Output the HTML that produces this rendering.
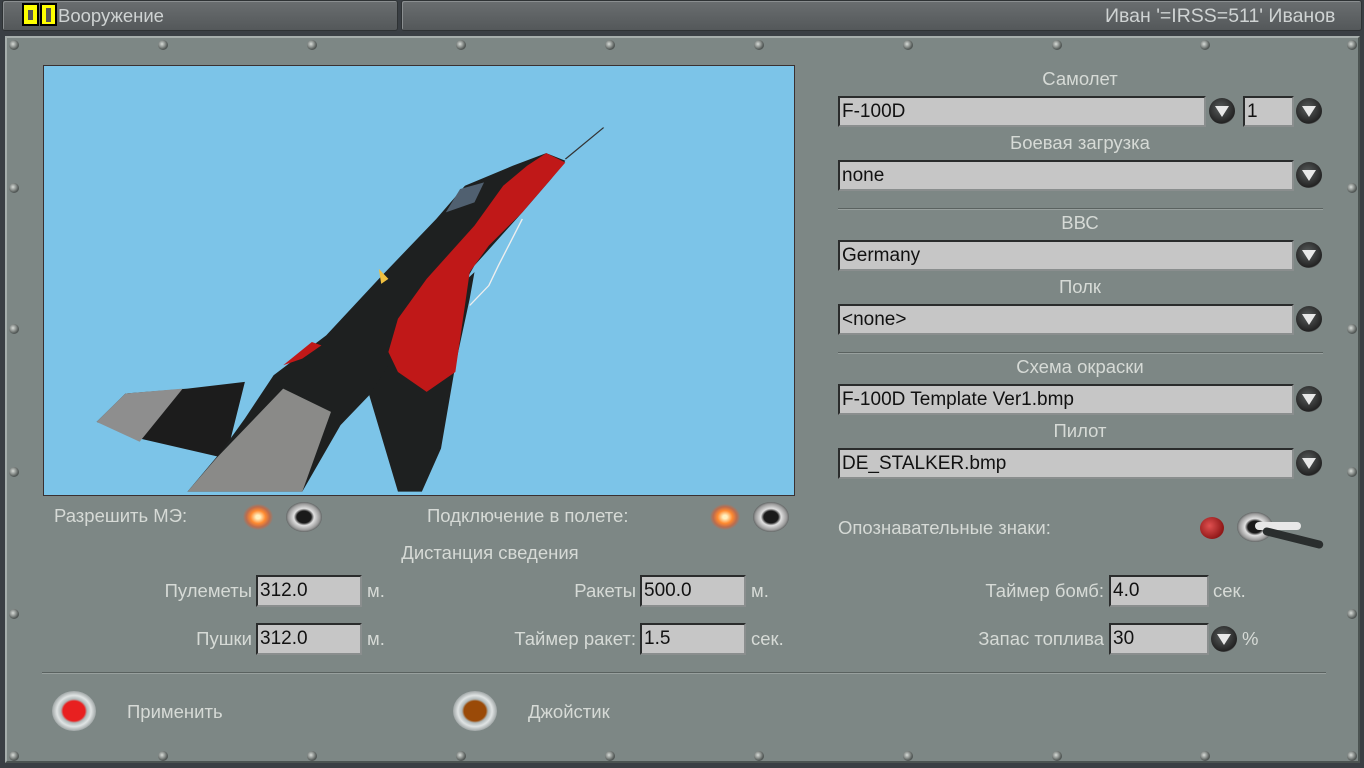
<!DOCTYPE html>
<html><head><meta charset="utf-8"><style>
*{margin:0;padding:0;box-sizing:border-box}
body{width:1364px;height:768px;overflow:hidden;background:#3a3f44;font-family:"Liberation Sans",sans-serif;position:relative}
.a{position:absolute}
.top{top:0;height:31px;background:linear-gradient(#6a6e70,#54585a);border:1px solid #2e3234;border-radius:3px;box-shadow:inset 1px 1px 0 #8a8e90}
.panel{left:5px;top:36px;width:1355px;height:727px;background:#7d8785;border-left:2px solid #a6aeac;border-top:2px solid #a6aeac;border-right:2px solid #4c5452;border-bottom:2px solid #4c5452}
.lbl{color:#d6dad6;font-size:18.5px;white-space:nowrap}
.f{background:#c6c6c6;border:2px solid #2a2c2c;border-right-color:#8a8e8e;border-bottom-color:#8a8e8e;color:#111;font-size:19px;padding-left:2px;line-height:27px;white-space:nowrap}
.dd{width:26px;height:26px;border-radius:50%;background:radial-gradient(circle at 45% 40%,#5a5e5e,#222 70%,#6a6e6e 75%,#7d8785 100%)}
.dd:after{content:"";position:absolute;left:6px;top:8px;border-left:7px solid transparent;border-right:7px solid transparent;border-top:11px solid #e8e8e8}
.sep{height:2px;background:#5a6260;border-bottom:1px solid #98a09e}
.sc{width:10px;height:10px;border-radius:50%;background:radial-gradient(circle at 40% 40%,#d8dcd8,#5a605e 60%,#2a2e2e)}
.c{text-align:center}
.glow{width:30px;height:26px;border-radius:50%;background:radial-gradient(#fff0c0 10%,#ff8a30 35%,rgba(230,90,40,.6) 55%,rgba(200,80,40,0) 72%)}
.tg{width:36px;height:30px;border-radius:50%;background:radial-gradient(#1a1a1a 28%,#e0e0e0 40%,#9a9a9a 62%,#5a5e5e 72%,rgba(0,0,0,0) 75%)}
</style></head><body>
<div class="a top" style="left:2px;width:396px"></div>
<div class="a top" style="left:401px;width:961px"></div>
<div class="a lbl" style="left:58px;top:5px;color:#cfd3d3">Вооружение</div>
<div class="a" style="left:22px;top:3px;width:17px;height:23px;background:#ff0;border:2px solid #000"><div style="margin:5px 4px;width:5px;height:10px;background:#555"></div></div>
<div class="a" style="left:40px;top:3px;width:17px;height:23px;background:#ff0;border:2px solid #000"><div style="margin:3px 4px;width:5px;height:14px;background:#555"></div></div>
<div class="a lbl" style="left:1105px;top:5px;color:#cfd3d3;font-size:19.5px">Иван '=IRSS=511' Иванов</div>
<div class="a panel"></div>

<div class="a sc" style="left:9px;top:40px"></div><div class="a sc" style="left:158px;top:40px"></div><div class="a sc" style="left:307px;top:40px"></div><div class="a sc" style="left:456px;top:40px"></div><div class="a sc" style="left:605px;top:40px"></div><div class="a sc" style="left:754px;top:40px"></div><div class="a sc" style="left:903px;top:40px"></div><div class="a sc" style="left:1052px;top:40px"></div><div class="a sc" style="left:1200px;top:40px"></div><div class="a sc" style="left:1347px;top:40px"></div>
<div class="a sc" style="left:9px;top:183px"></div><div class="a sc" style="left:9px;top:324px"></div><div class="a sc" style="left:9px;top:467px"></div><div class="a sc" style="left:9px;top:609px"></div><div class="a sc" style="left:9px;top:751px"></div>
<div class="a sc" style="left:1347px;top:183px"></div><div class="a sc" style="left:1347px;top:324px"></div><div class="a sc" style="left:1347px;top:467px"></div><div class="a sc" style="left:1347px;top:609px"></div><div class="a sc" style="left:1347px;top:751px"></div>
<div class="a sc" style="left:158px;top:751px"></div><div class="a sc" style="left:307px;top:751px"></div><div class="a sc" style="left:456px;top:751px"></div><div class="a sc" style="left:605px;top:751px"></div><div class="a sc" style="left:754px;top:751px"></div><div class="a sc" style="left:903px;top:751px"></div><div class="a sc" style="left:1052px;top:751px"></div><div class="a sc" style="left:1200px;top:751px"></div>

<div class="a" style="left:43px;top:65px;width:752px;height:431px;border:1px solid #3a3030;background:#7cc4e8;overflow:hidden">
<svg width="750" height="429" viewBox="0 0 1568 1290" preserveAspectRatio="none">
<line x1="1090" y1="280" x2="1170" y2="185" stroke="#333" stroke-width="3"/>
<polygon points="110,1070 170,985 300,970 420,950 380,1180 200,1120" fill="#1c1c1c"/>
<polygon points="110,1070 170,985 290,970 200,1130" fill="#8e8e8e"/>
<polygon points="1090,285 1060,340 1000,440 900,600 860,700 780,830 700,960 620,1080 540,1280 300,1280 370,1160 420,1060 480,930 590,810 700,640 820,460 880,360 980,300 1050,262" fill="#1e2020"/>
<polygon points="900,620 890,700 860,900 830,1150 790,1280 740,1280 680,990 760,810" fill="#1e2020"/>
<polygon points="1050,262 1090,290 1060,340 1000,440 930,540 890,620 880,720 860,920 800,980 740,920 720,860 740,760 800,640 900,480 960,360 1010,300" fill="#c01818"/>
<polygon points="560,830 500,900 540,880 580,840" fill="#c01818"/>
<polygon points="300,1280 360,1180 500,970 600,1040 540,1280" fill="#8a8a88"/>
<polygon points="840,440 870,370 920,350 900,410" fill="#506070"/>
<polyline points="1000,460 950,600 930,660 890,720" fill="none" stroke="#eee" stroke-width="3"/>
<polygon points="700,610 720,640 705,655" fill="#f0c040"/>
</svg></div>

<div class="a lbl" style="left:54px;top:505px">Разрешить МЭ:</div>
<div class="a glow" style="left:243px;top:504px"></div>
<div class="a tg" style="left:286px;top:502px"></div>
<div class="a lbl" style="left:427px;top:505px">Подключение в полете:</div>
<div class="a glow" style="left:710px;top:504px"></div>
<div class="a tg" style="left:753px;top:502px"></div>
<div class="a lbl c" style="left:340px;top:542px;width:300px">Дистанция сведения</div>
<div class="a lbl" style="left:838px;top:517px">Опознавательные знаки:</div>
<div class="a" style="left:1200px;top:517px;width:24px;height:22px;border-radius:50%;background:radial-gradient(circle at 40% 40%,#e05050,#901818 70%)"></div>
<div class="a tg" style="left:1237px;top:512px"></div>
<div class="a" style="left:1255px;top:522px;width:46px;height:8px;background:#e8e8e8;border-radius:4px"></div>
<div class="a" style="left:1262px;top:534px;width:62px;height:8px;background:#2a2e2e;border-radius:4px;transform:rotate(14deg)"></div>

<div class="a lbl c" style="left:980px;top:68px;width:200px">Самолет</div>
<div class="a f" style="left:838px;top:96px;width:368px;height:31px">F-100D</div>
<div class="a dd" style="left:1209px;top:98px"></div>
<div class="a f" style="left:1243px;top:96px;width:51px;height:31px">1</div>
<div class="a dd" style="left:1296px;top:98px"></div>
<div class="a lbl c" style="left:980px;top:132px;width:200px">Боевая загрузка</div>
<div class="a f" style="left:838px;top:160px;width:456px;height:31px">none</div>
<div class="a dd" style="left:1296px;top:162px"></div>
<div class="a sep" style="left:838px;top:208px;width:485px"></div>
<div class="a lbl c" style="left:980px;top:212px;width:200px">ВВС</div>
<div class="a f" style="left:838px;top:240px;width:456px;height:31px">Germany</div>
<div class="a dd" style="left:1296px;top:242px"></div>
<div class="a lbl c" style="left:980px;top:276px;width:200px">Полк</div>
<div class="a f" style="left:838px;top:304px;width:456px;height:31px">&lt;none&gt;</div>
<div class="a dd" style="left:1296px;top:306px"></div>
<div class="a sep" style="left:838px;top:352px;width:485px"></div>
<div class="a lbl c" style="left:980px;top:356px;width:200px">Схема окраски</div>
<div class="a f" style="left:838px;top:384px;width:456px;height:31px">F-100D Template Ver1.bmp</div>
<div class="a dd" style="left:1296px;top:386px"></div>
<div class="a lbl c" style="left:980px;top:420px;width:200px">Пилот</div>
<div class="a f" style="left:838px;top:448px;width:456px;height:31px">DE_STALKER.bmp</div>
<div class="a dd" style="left:1296px;top:450px"></div>

<div class="a lbl" style="left:52px;top:580px;width:200px;text-align:right">Пулеметы</div>
<div class="a f" style="left:256px;top:575px;width:106px;height:32px">312.0</div>
<div class="a lbl" style="left:367px;top:580px">м.</div>
<div class="a lbl" style="left:52px;top:628px;width:200px;text-align:right">Пушки</div>
<div class="a f" style="left:256px;top:623px;width:106px;height:32px">312.0</div>
<div class="a lbl" style="left:367px;top:628px">м.</div>
<div class="a lbl" style="left:436px;top:580px;width:200px;text-align:right">Ракеты</div>
<div class="a f" style="left:640px;top:575px;width:106px;height:32px">500.0</div>
<div class="a lbl" style="left:751px;top:580px">м.</div>
<div class="a lbl" style="left:436px;top:628px;width:200px;text-align:right">Таймер ракет:</div>
<div class="a f" style="left:640px;top:623px;width:106px;height:32px">1.5</div>
<div class="a lbl" style="left:751px;top:628px">сек.</div>
<div class="a lbl" style="left:904px;top:580px;width:200px;text-align:right">Таймер бомб:</div>
<div class="a f" style="left:1109px;top:575px;width:100px;height:32px">4.0</div>
<div class="a lbl" style="left:1213px;top:580px">сек.</div>
<div class="a lbl" style="left:904px;top:628px;width:200px;text-align:right">Запас топлива</div>
<div class="a f" style="left:1109px;top:623px;width:100px;height:32px">30</div>
<div class="a dd" style="left:1211px;top:626px"></div>
<div class="a lbl" style="left:1242px;top:628px">%</div>

<div class="a sep" style="left:42px;top:672px;width:1284px"></div>
<div class="a" style="left:52px;top:691px;width:44px;height:40px;border-radius:50%;background:radial-gradient(#e82020 35%,#b0b8b8 42%,#e0e4e4 55%,#7a8282 80%)"></div>
<div class="a lbl" style="left:127px;top:701px">Применить</div>
<div class="a" style="left:453px;top:691px;width:44px;height:40px;border-radius:50%;background:radial-gradient(#9a4a08 35%,#b0b8b8 42%,#e0e4e4 55%,#7a8282 80%)"></div>
<div class="a lbl" style="left:528px;top:701px">Джойстик</div>
</body></html>
